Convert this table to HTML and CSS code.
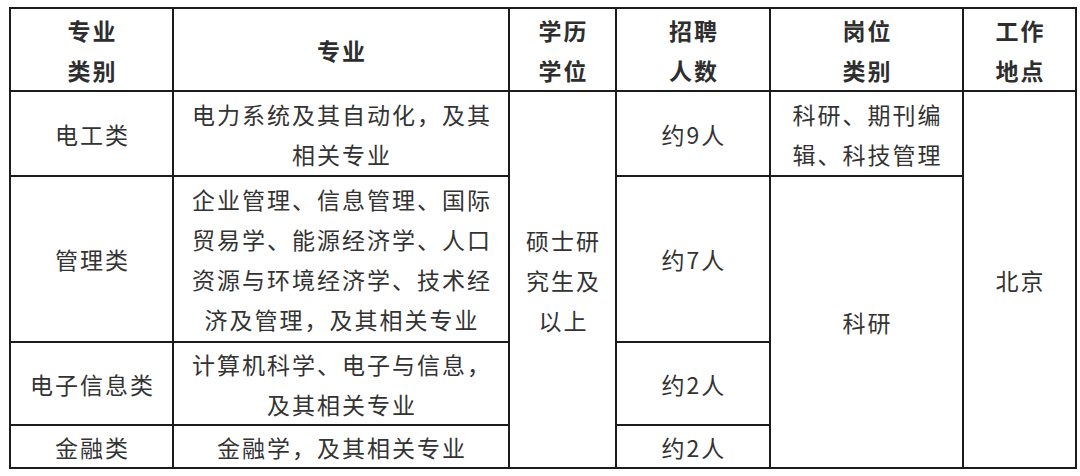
FILE: index.html
```html
<!DOCTYPE html>
<html lang="zh-CN">
<head>
<meta charset="utf-8">
<title>招聘岗位</title>
<link rel="stylesheet" href="styles.css">
</head>
<body>
<div class="wrap">
<table class="jobs">
  <colgroup>
    <col class="c1"><col class="c2"><col class="c3"><col class="c4"><col class="c5"><col class="c6">
  </colgroup>
  <thead>
    <tr class="r-head">
      <th>专业<br>类别</th>
      <th>专业</th>
      <th>学历<br>学位</th>
      <th>招聘<br>人数</th>
      <th>岗位<br>类别</th>
      <th>工作<br>地点</th>
    </tr>
  </thead>
  <tbody>
    <tr class="r1">
      <td>电工类</td>
      <td>电力系统及其自动化，及其<br>相关专业</td>
      <td rowspan="4">硕士研<br>究生及<br>以上</td>
      <td>约9人</td>
      <td>科研、期刊编<br>辑、科技管理</td>
      <td rowspan="4">北京</td>
    </tr>
    <tr class="r2">
      <td>管理类</td>
      <td>企业管理、信息管理、国际<br>贸易学、能源经济学、人口<br>资源与环境经济学、技术经<br>济及管理，及其相关专业</td>
      <td>约7人</td>
      <td rowspan="3">科研</td>
    </tr>
    <tr class="r3">
      <td>电子信息类</td>
      <td>计算机科学、电子与信息，<br>及其相关专业</td>
      <td>约2人</td>
    </tr>
    <tr class="r4">
      <td>金融类</td>
      <td>金融学，及其相关专业</td>
      <td>约2人</td>
    </tr>
  </tbody>
</table>
</div>
</body>
</html>
```
FILE: styles.css
```css
html, body {
  margin: 0;
  padding: 0;
  background: #ffffff;
}

.wrap {
  padding: 7px 0 0 9px;
}

.jobs {
  border-collapse: collapse;
  table-layout: fixed;
  width: 1066px;
  font-family: "Noto Sans CJK SC", "Noto Sans", sans-serif;
  font-size: 23px;
  line-height: 40px;
  letter-spacing: 2px;
  color: #333333;
}

.c1 { width: 163px; }
.c2 { width: 336px; }
.c3 { width: 107px; }
.c4 { width: 154px; }
.c5 { width: 193px; }
.c6 { width: 113px; }

.jobs th,
.jobs td {
  border: 2px solid #1c1c1c;
  padding: 0 0 0 2px;
  text-align: center;
  vertical-align: middle;
  white-space: nowrap;
}

.jobs th {
  font-weight: 700;
  color: #2e2e2e;
}

.r-head { height: 83px; }
.r1 { height: 85px; }
.r2 { height: 166px; }
.r3 { height: 83px; }
.r4 { height: 43px; }
```
